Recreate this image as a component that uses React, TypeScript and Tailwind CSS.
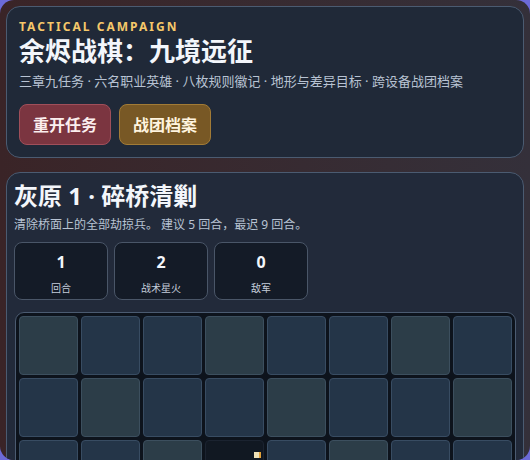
import React from "react"

type Cell = "t" | "b" | "d"

const rows: Cell[][] = [
  ["t", "b", "b", "t", "b", "b", "t", "b"],
  ["b", "t", "b", "b", "t", "b", "b", "t"],
  ["b", "b", "t", "d", "b", "t", "b", "b"],
  ["t", "b", "b", "t", "b", "b", "t", "b"],
  ["b", "t", "b", "b", "t", "b", "b", "t"],
]

const stats = [
  { value: "1", label: "回合" },
  { value: "2", label: "战术星火" },
  { value: "0", label: "敌军" },
]

function BoardCell({ kind }: { kind: Cell }) {
  if (kind === "d") {
    return (
      <div className="relative h-[59px] rounded-[4px] border border-[#1b2330] bg-[#111822]">
        <div className="absolute top-[11px] right-[2px] h-[6px] w-[7px] border-r-2 border-[#e3a23a] bg-[#efe2b8]" />
      </div>
    )
  }
  return (
    <div
      className={
        kind === "t"
          ? "h-[59px] rounded-[4px] border border-[#3c4f5e] bg-[#2c3d48]"
          : "h-[59px] rounded-[4px] border border-[#384c62] bg-[#243548]"
      }
    />
  )
}

export default function App() {
  return (
    <div className="h-screen w-full bg-[#6c6ad8] font-['Noto_Sans','Noto_Sans_CJK_SC',sans-serif]">
      <div className="flex h-full flex-col gap-[14px] overflow-hidden rounded-[14px] bg-linear-to-r from-[#3a2427] to-[#34303a] p-[6px]">
        <section className="rounded-[14px] border border-[#4b5b71] bg-[#202938] px-[12px] pt-[12px] pb-[12px]">
          <p className="text-[12px] leading-[16px] font-bold tracking-[0.17em] text-[#f5c86a]">TACTICAL CAMPAIGN</p>
          <h1 className="text-[26px] leading-[32px] font-bold text-[#f3f6fb]">余烬战棋：九境远征</h1>
          <p className="mt-[4px] text-[13px] leading-[20px] text-[#b8c3d3]">
            三章九任务 · 六名职业英雄 · 八枚规则徽记 · 地形与差异目标 · 跨设备战团档案
          </p>
          <div className="mt-[13px] flex gap-[8px]">
            <button className="h-[41px] rounded-[8px] border border-[#a04f5a] bg-[#7b3540] px-[13px] text-[16px] font-bold text-[#fbeeee]">
              重开任务
            </button>
            <button className="h-[41px] rounded-[8px] border border-[#a27b36] bg-[#785825] px-[13px] text-[16px] font-bold text-[#fff4df]">
              战团档案
            </button>
          </div>
        </section>

        <section className="rounded-t-[14px] border border-[#4b5b71] bg-[#222a3a] px-[7px] pt-[8px] pb-[8px]">
          <h2 className="text-[24px] leading-[30px] font-bold text-[#f3f6fb]">灰原 1 · 碎桥清剿</h2>
          <p className="mt-[5px] text-[12px] leading-[18px] text-[#b8c3d3]">
            清除桥面上的全部劫掠兵。 建议 5 回合，最迟 9 回合。
          </p>
          <div className="mt-[8px] flex gap-[6px]">
            {stats.map((s) => (
              <div
                key={s.label}
                className="flex h-[58px] w-[94px] flex-col items-center rounded-[8px] border border-[#4a5668] bg-[#141b27] pt-[7px]"
              >
                <span className="text-[16px] leading-[24px] font-bold text-[#f3f6fb]">{s.value}</span>
                <span className="mt-[7px] text-[10px] leading-[14px] text-[#c4cdda]">{s.label}</span>
              </div>
            ))}
          </div>
          <div className="mt-[12px] ml-[1px] rounded-[9px] border border-[#4b5b71] bg-[#0d131c] p-[3px]">
            <div className="grid grid-cols-8 gap-[3px]">
              {rows.map((row, r) =>
                row.map((kind, c) => <BoardCell key={r + "-" + c} kind={kind} />)
              )}
            </div>
          </div>
        </section>
      </div>
    </div>
  )
}
